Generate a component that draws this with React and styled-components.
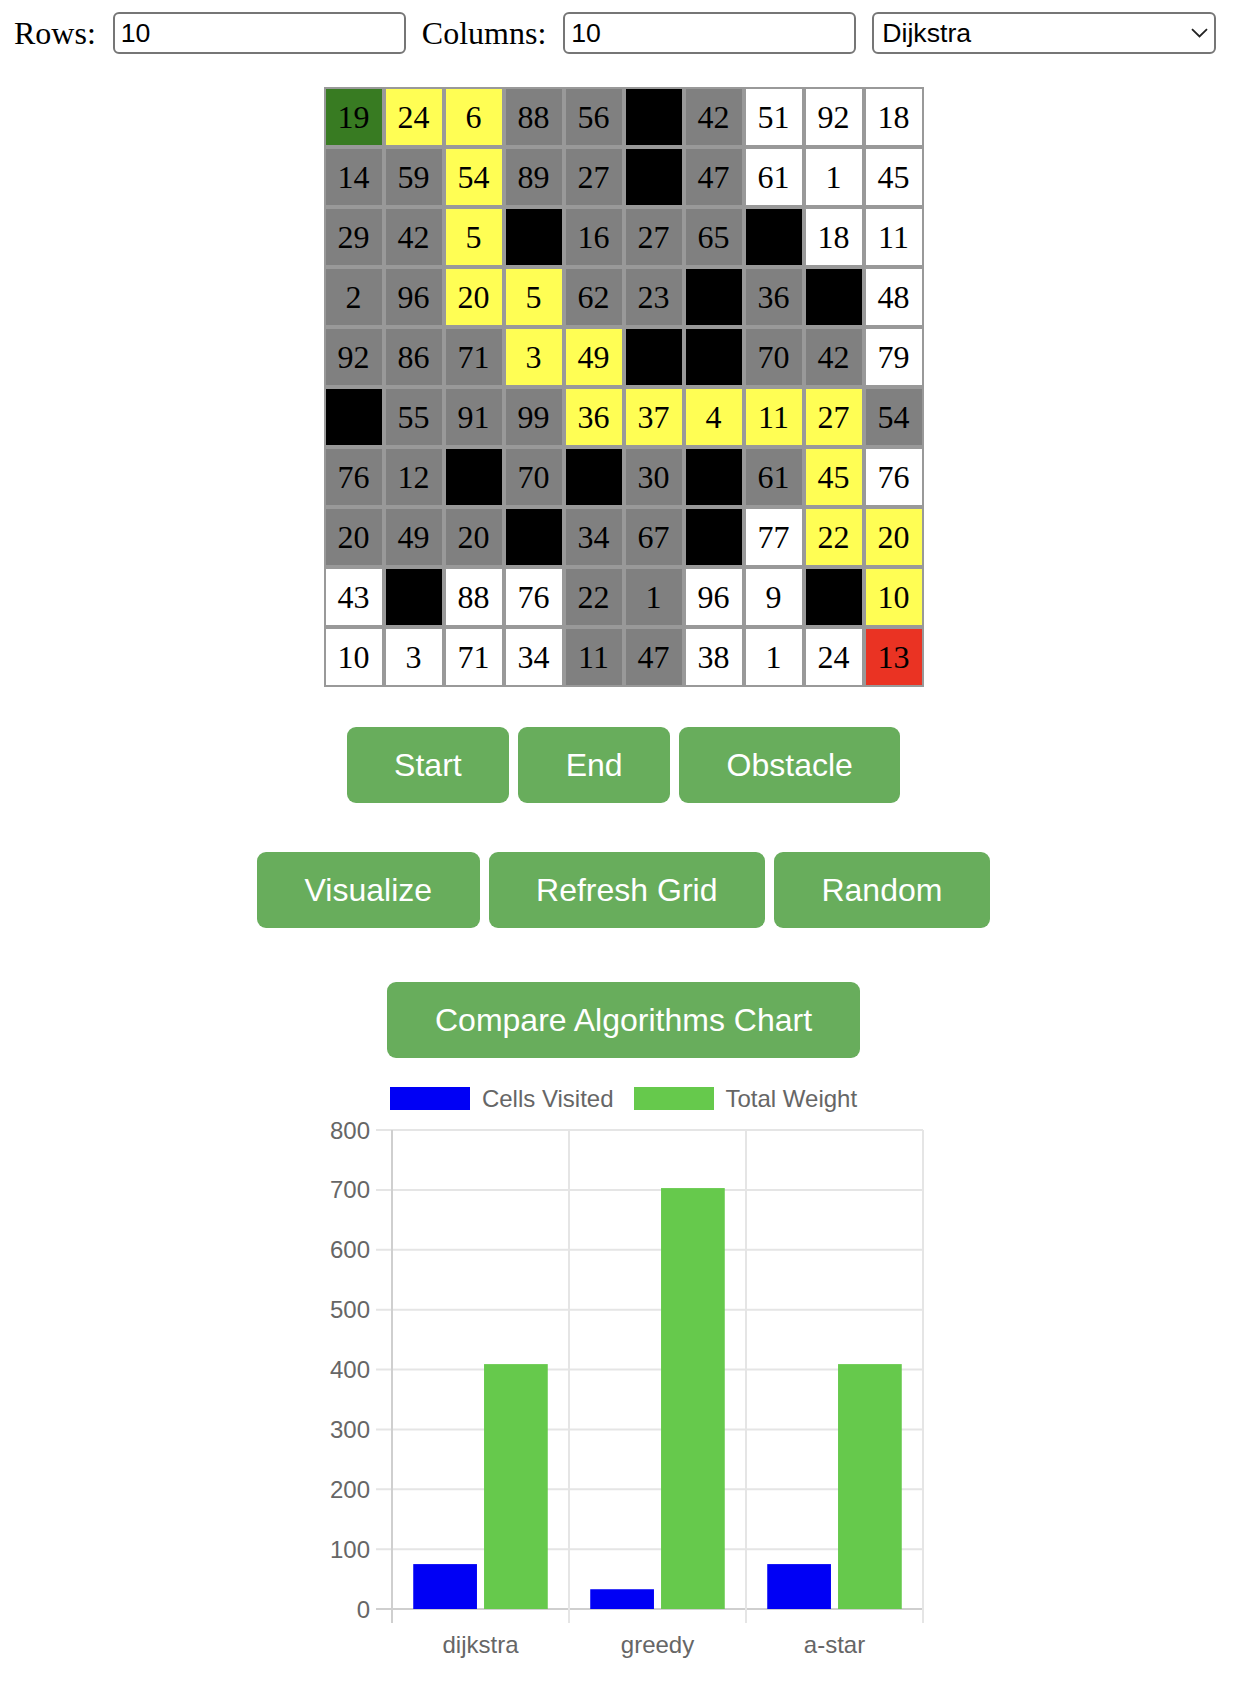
import React from 'react';
import styled, { createGlobalStyle } from 'styled-components';

const GlobalStyle = createGlobalStyle`
  body {
    margin: 0;
    background: #ffffff;
    font-family: "Liberation Serif", "Times New Roman", serif;
  }
`;

const Page = styled.div`
  padding: 12px 19px 40px 14px;
  display: flex;
  flex-direction: column;
  align-items: center;
`;

const TopBar = styled.div`
  align-self: stretch;
  display: flex;
  align-items: center;
  height: 42px;
`;

const Label = styled.label`
  font-family: "Liberation Serif", "Times New Roman", serif;
  font-size: 32px;
  line-height: 1;
  color: #000;
  margin-right: 17px;
`;

const TextInput = styled.input`
  box-sizing: border-box;
  width: 293px;
  height: 42px;
  margin-right: 16px;
  padding: 0 6px;
  border: 2px solid #767676;
  border-radius: 6px;
  font-family: "Liberation Sans", Arial, sans-serif;
  font-size: 26.67px;
  color: #000;
  outline: none;
`;

const SelectWrap = styled.div`
  position: relative;
  width: 344px;
  height: 42px;
`;

const Select = styled.select`
  appearance: none;
  box-sizing: border-box;
  width: 100%;
  height: 100%;
  padding: 0 8px;
  border: 2px solid #767676;
  border-radius: 6px;
  background: #fff;
  font-family: "Liberation Sans", Arial, sans-serif;
  font-size: 26.67px;
  color: #000;
`;

const Chevron = styled.svg`
  position: absolute;
  right: 8px;
  top: 16px;
  pointer-events: none;
`;

const Board = styled.div`
  display: grid;
  grid-template-columns: repeat(10, 60px);
  width: 600px;
  margin-top: 33px;
`;

const cellColors = {
  start: '#387b22',
  end: '#ea3323',
  path: '#fffe54',
  seen: '#808080',
  wall: '#000000',
  open: '#ffffff',
};

const Cell = styled.div`
  box-sizing: border-box;
  width: 60px;
  height: 60px;
  border: 2px solid #999999;
  background: ${(p) => cellColors[p.$kind]};
  display: flex;
  align-items: center;
  justify-content: center;
  font-family: "Liberation Serif", "Times New Roman", serif;
  font-size: 32px;
  color: #000;
`;

const ButtonRow = styled.div`
  display: flex;
  gap: 9px;
  margin-top: ${(p) => p.$top}px;
`;

const Button = styled.button`
  height: 76px;
  padding: 0 47.5px;
  border: none;
  border-radius: 9px;
  background: #68ad5c;
  color: #ffffff;
  font-family: "Liberation Sans", Arial, sans-serif;
  font-size: 32px;
  cursor: pointer;
`;

const Legend = styled.div`
  display: flex;
  align-items: center;
  height: 23px;
  margin-top: 29px;
`;

const Swatch = styled.span`
  width: 80px;
  height: 23px;
  background: ${(p) => p.$color};
  margin-right: 12px;
`;

const LegendText = styled.span`
  font-family: "Liberation Sans", Arial, sans-serif;
  font-size: 24px;
  color: #666;
  margin-right: ${(p) => (p.$last ? 0 : 20)}px;
`;

const ChartSvg = styled.svg`
  display: block;
  margin-top: 2px;
`;

// G = start, E = end, Y = path, g = visited, W = open, # = wall
const layout = [
  'GYYgg#gWWW',
  'ggYgg#gWWW',
  'ggY#ggg#WW',
  'ggYYgg#g#W',
  'gggYY##ggW',
  '#ggg YYYYYg'.replace(' ', ''),
  'gg#g#g#gYW',
  'ggg#gg#WYY',
  'W#WWggWW#Y',
  'WWWWggWWWE',
];

const numbers = [
  [19, 24, 6, 88, 56, 0, 42, 51, 92, 18],
  [14, 59, 54, 89, 27, 0, 47, 61, 1, 45],
  [29, 42, 5, 0, 16, 27, 65, 0, 18, 11],
  [2, 96, 20, 5, 62, 23, 0, 36, 0, 48],
  [92, 86, 71, 3, 49, 0, 0, 70, 42, 79],
  [0, 55, 91, 99, 36, 37, 4, 11, 27, 54],
  [76, 12, 0, 70, 0, 30, 0, 61, 45, 76],
  [20, 49, 20, 0, 34, 67, 0, 77, 22, 20],
  [43, 0, 88, 76, 22, 1, 96, 9, 0, 10],
  [10, 3, 71, 34, 11, 47, 38, 1, 24, 13],
];

const kindOf = {
  G: 'start',
  E: 'end',
  Y: 'path',
  g: 'seen',
  W: 'open',
  '#': 'wall',
};

const results = [
  { name: 'dijkstra', visited: 75, weight: 409 },
  { name: 'greedy', visited: 33, weight: 703 },
  { name: 'a-star', visited: 75, weight: 409 },
];

function Chart() {
  const left = 82;
  const right = 613;
  const top = 18;
  const bottom = 497;
  const perUnit = (bottom - top) / 800;
  const cat = (right - left) / 3;
  const slot = (cat * 0.8) / 2;
  const bar = slot * 0.9;
  const ticks = [0, 100, 200, 300, 400, 500, 600, 700, 800];

  return (
    <ChartSvg width="627" height="560" viewBox="0 0 627 560">
      {ticks.map((t) => {
        const y = bottom - t * perUnit;
        return (
          <g key={t}>
            <line
              x1={left - 16}
              x2={right}
              y1={y}
              y2={y}
              stroke={t === 0 ? '#cfcfcf' : '#e5e5e5'}
              strokeWidth="2"
            />
            <text
              x={left - 22}
              y={y + 8.5}
              textAnchor="end"
              fontFamily="Liberation Sans, Arial, sans-serif"
              fontSize="24"
              fill="#666"
            >
              {t}
            </text>
          </g>
        );
      })}
      {[1, 2, 3].map((i) => (
        <line
          key={i}
          x1={left + i * cat}
          x2={left + i * cat}
          y1={top}
          y2={bottom + 14}
          stroke="#e5e5e5"
          strokeWidth="2"
        />
      ))}
      <line x1={left} x2={left} y1={top} y2={bottom + 14} stroke="#cfcfcf" strokeWidth="2" />
      {results.map((r, i) => {
        const x0 = left + i * cat + cat * 0.1 + (slot - bar) / 2;
        const hv = r.visited * perUnit;
        const hw = r.weight * perUnit;
        return (
          <g key={r.name}>
            <rect x={x0} y={bottom - hv} width={bar} height={hv} fill="#0000f5" />
            <rect x={x0 + slot} y={bottom - hw} width={bar} height={hw} fill="#66c94c" />
            <text
              x={left + i * cat + cat / 2}
              y={bottom + 44}
              textAnchor="middle"
              fontFamily="Liberation Sans, Arial, sans-serif"
              fontSize="24"
              fill="#666"
            >
              {r.name}
            </text>
          </g>
        );
      })}
    </ChartSvg>
  );
}

export default function App() {
  return (
    <>
      <GlobalStyle />
      <Page>
        <TopBar>
          <Label>Rows:</Label>
          <TextInput type="text" defaultValue="10" />
          <Label>Columns:</Label>
          <TextInput type="text" defaultValue="10" />
          <SelectWrap>
            <Select defaultValue="dijkstra">
              <option value="dijkstra">Dijkstra</option>
              <option value="greedy">Greedy</option>
              <option value="a-star">A-Star</option>
            </Select>
            <Chevron width="17" height="10" viewBox="0 0 17 10">
              <path d="M1 1.2 L8.5 8.5 L16 1.2" fill="none" stroke="#222" strokeWidth="1.8" />
            </Chevron>
          </SelectWrap>
        </TopBar>

        <Board>
          {layout.map((row, r) =>
            row.split('').map((c, col) => (
              <Cell key={`${r}-${col}`} $kind={kindOf[c]}>
                {c === '#' ? '' : numbers[r][col]}
              </Cell>
            ))
          )}
        </Board>

        <ButtonRow $top={40}>
          <Button>Start</Button>
          <Button>End</Button>
          <Button>Obstacle</Button>
        </ButtonRow>

        <ButtonRow $top={49}>
          <Button>Visualize</Button>
          <Button>Refresh Grid</Button>
          <Button>Random</Button>
        </ButtonRow>

        <ButtonRow $top={54}>
          <Button>Compare Algorithms Chart</Button>
        </ButtonRow>

        <Legend>
          <Swatch $color="#0000f5" />
          <LegendText>Cells Visited</LegendText>
          <Swatch $color="#66c94c" />
          <LegendText $last>Total Weight</LegendText>
        </Legend>

        <Chart />
      </Page>
    </>
  );
}
